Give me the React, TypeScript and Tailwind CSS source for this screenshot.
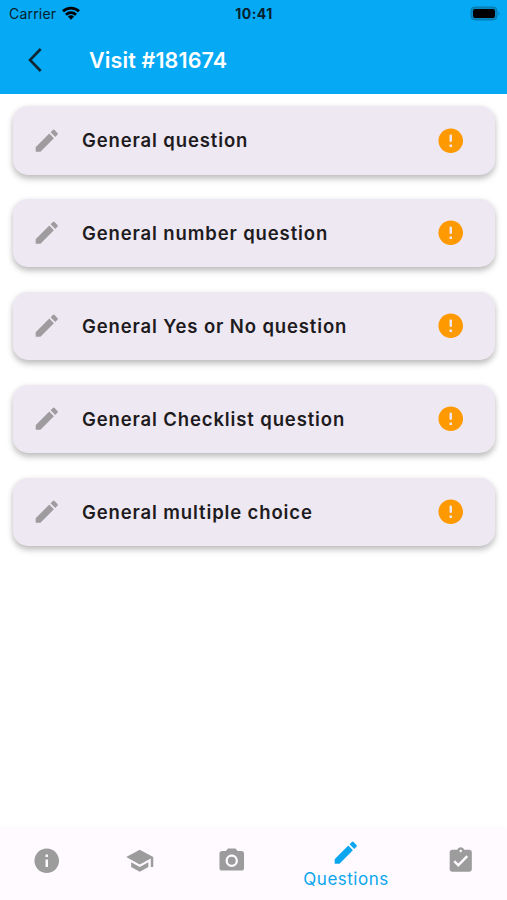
const PATHS = {
  edit: 'M3 17.46v3.04c0 .28.22.5.5.5h3.04c.13 0 .26-.05.35-.15L17.81 9.94l-3.75-3.75L3.15 17.1c-.1.1-.15.22-.15.36zM20.71 7.04c.39-.39.39-1.02 0-1.41l-2.34-2.34a.996.996 0 0 0-1.41 0l-1.83 1.83 3.75 3.75 1.83-1.83z',
  error: 'M12 2C6.48 2 2 6.48 2 12s4.48 10 10 10 10-4.48 10-10S17.52 2 12 2zm0 11c-.55 0-1-.45-1-1V8c0-.55.45-1 1-1s1 .45 1 1v4c0 .55-.45 1-1 1zm1 4h-2v-2h2v2z',
  info: 'M12 2C6.48 2 2 6.48 2 12s4.48 10 10 10 10-4.48 10-10S17.52 2 12 2zm1 15h-2v-6h2v6zm0-8h-2V7h2v2z',
  school: 'M5 13.18v4L12 21l7-3.82v-4L12 17l-7-3.82zM12 3L1 9l11 6 9-4.91V17h2V9L12 3z',
  camera: 'M12 8.8a3.2 3.2 0 1 0 0 6.4 3.2 3.2 0 0 0 0-6.4zM9 2L7.17 4H4c-1.1 0-2 .9-2 2v12c0 1.1.9 2 2 2h16c1.1 0 2-.9 2-2V6c0-1.1-.9-2-2-2h-3.17L15 2H9zm3 15c-2.76 0-5-2.24-5-5s2.24-5 5-5 5 2.24 5 5-2.24 5-5 5z',
  task: 'M19 3h-4.18C14.4 1.84 13.3 1 12 1c-1.3 0-2.4.84-2.82 2H5c-1.1 0-2 .9-2 2v14c0 1.1.9 2 2 2h14c1.1 0 2-.9 2-2V5c0-1.1-.9-2-2-2zm-7 0c.55 0 1 .45 1 1s-.45 1-1 1-1-.45-1-1 .45-1 1-1zm-2 14l-4-4 1.41-1.41L10 14.17l6.59-6.59L18 9l-8 8z',
};

function Icon({ name, className }: { name: keyof typeof PATHS; className?: string }) {
  return (
    <svg viewBox="0 0 24 24" className={`size-[29.5px] shrink-0 fill-current ${className ?? ''}`}>
      <path d={PATHS[name]} />
    </svg>
  );
}

const QUESTIONS = [
  'General question',
  'General number question',
  'General Yes or No question',
  'General Checklist question',
  'General multiple choice',
];

const TABS: { icon: keyof typeof PATHS; label?: string }[] = [
  { icon: 'info' },
  { icon: 'school' },
  { icon: 'camera' },
  { icon: 'edit', label: 'Questions' },
  { icon: 'task' },
];

export default function App() {
  return (
    <div className="flex h-[900px] w-[507px] flex-col overflow-hidden bg-white font-['Inter',sans-serif]">
      <header className="h-[93.5px] shrink-0 bg-[#05a9f4]">
        <div className="grid h-[27px] grid-cols-3 items-center pr-[6px] pl-[9px] text-[#06202d]">
          <div className="flex items-center gap-[6px]">
            <span className="text-[14px] leading-none tracking-[0.2px]">Carrier</span>
            <svg viewBox="0 0 18 14" className="mb-px h-[14px] w-[18px]" fill="none" stroke="#000" strokeWidth="2.7">
              <path d="M1 5.3a11.5 11.5 0 0 1 16 0" />
              <path d="M4 8.7a7.2 7.2 0 0 1 10 0" />
              <path d="M9 13.7 5.9 10.6a4.5 4.5 0 0 1 6.2 0z" fill="#000" stroke="none" />
            </svg>
          </div>
          <span className="pr-[2px] text-center text-[14px] leading-none font-bold tracking-[0.5px]">10:41</span>
          <svg viewBox="0 0 31 15" className="h-[15px] w-[31px] justify-self-end">
            <rect x="1" y="1" width="26" height="13" rx="4" fill="#0688c4" stroke="#087bac" strokeWidth="1" />
            <rect x="3" y="3" width="22" height="9" rx="2.2" fill="#000" />
            <path d="M28.5 5.5q2 2 0 4z" fill="#087bac" />
          </svg>
        </div>
        <div className="flex h-[66px] items-center pl-[28px]">
          <svg viewBox="0 0 14 24" className="h-6 w-[14px]" fill="none" stroke="#102630" strokeWidth="2.6">
            <path d="M12.7 1 2 12l10.7 11" />
          </svg>
          <h1 className="mt-[2px] ml-[47px] text-[21.5px] leading-none font-semibold tracking-[0.12px] text-white">
            Visit #181674
          </h1>
        </div>
      </header>

      <main className="flex flex-1 flex-col gap-[24.4px] px-[12.5px] pt-[12.5px]">
        {QUESTIONS.map((question) => (
          <div
            key={question}
            className="flex h-[68.5px] items-center rounded-[15px] bg-[#eee8f3] pr-[29px] pl-[19.5px] shadow-[0_4px_6px_rgba(0,0,0,0.22),0_1px_6px_rgba(0,0,0,0.08)]"
          >
            <Icon name="edit" className="text-[#9e9c9f]" />
            <span className="mt-[2px] ml-[20.5px] flex-1 text-[18.5px] font-semibold tracking-[0.87px] text-[#1d1b20]">
              {question}
            </span>
            <Icon name="error" className="text-[#ff9900]" />
          </div>
        ))}
      </main>

      <nav className="grid h-[72px] shrink-0 grid-cols-[94px_92px_92px_136px_93px] items-center bg-[#fefaff] pb-[6px] shadow-[0_-1px_5px_rgba(0,0,0,0.025)]">
        {TABS.map(({ icon, label }) => (
          <button
            key={icon}
            className={`flex flex-col items-center ${label ? 'pt-[7px] text-[#0ba6ee]' : 'text-[#9c9c9c]'}`}
          >
            <Icon name={icon} />
            {label && <span className="text-[17px] leading-6 tracking-[0.5px]">{label}</span>}
          </button>
        ))}
      </nav>
    </div>
  );
}
